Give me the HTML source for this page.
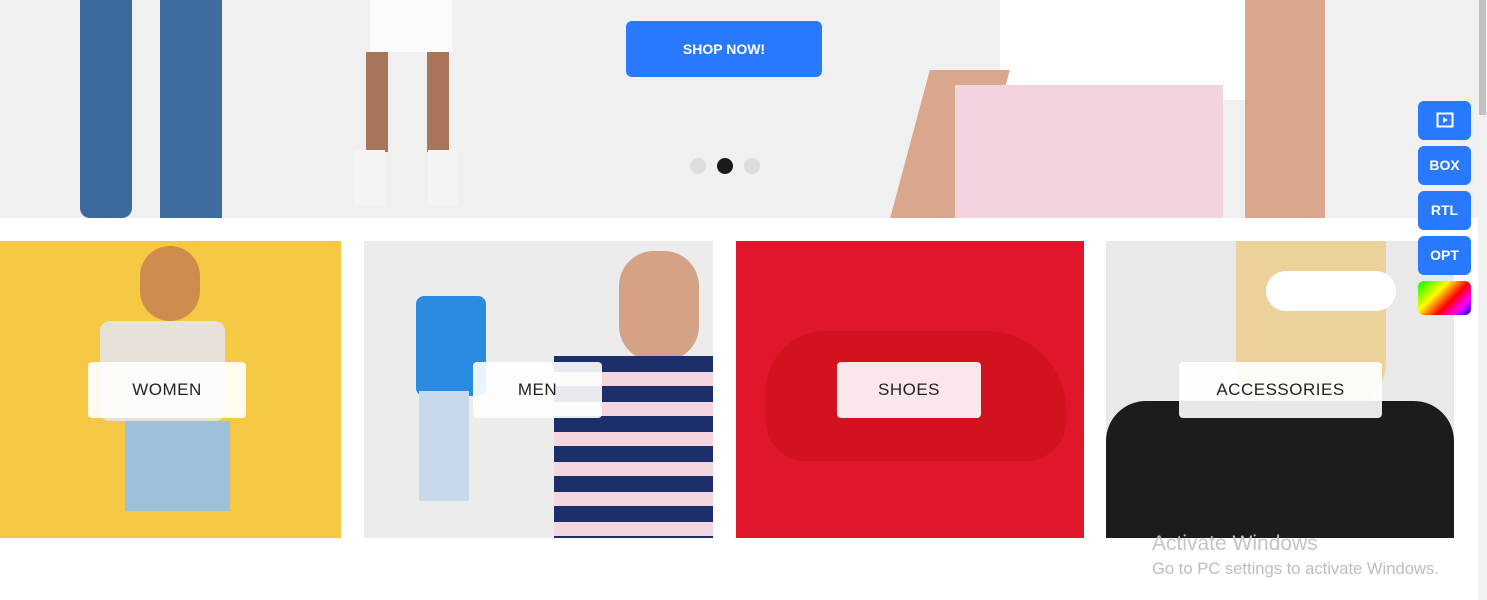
<!DOCTYPE html>
<html><head><meta charset="utf-8"><style>
*{margin:0;padding:0;box-sizing:border-box}
body{width:1487px;height:600px;overflow:hidden;background:#fff;font-family:"Liberation Sans",sans-serif;position:relative}
.hero{position:absolute;left:0;top:0;width:1478px;height:218px;background:#f0f0f0;overflow:hidden}
.btn{position:absolute;left:626px;top:21px;width:196px;height:56px;background:#2979ff;border-radius:6px;color:#fff;font-weight:bold;font-size:14px;text-align:center;line-height:56px}
.dot{position:absolute;top:158px;width:16px;height:16px;border-radius:50%;background:#dcdcdc}
.tile{position:absolute;top:241px;height:297px;overflow:hidden}
.lbl{position:absolute;top:121px;height:56px;background:rgba(255,255,255,.9);border-radius:4px;font-size:17px;color:#222;text-align:center;line-height:56px;letter-spacing:.5px}
.sb{position:absolute;left:1418px;width:53px;height:39px;background:#2979ff;border-radius:6px;color:#fff;font-weight:bold;font-size:14px;text-align:center;line-height:39px}
.abs{position:absolute}
</style></head><body>
<div class="hero">
  <div class="abs" style="left:80px;top:0;width:52px;height:218px;background:#3d6a9e;border-radius:0 0 10px 10px"></div>
  <div class="abs" style="left:160px;top:0;width:62px;height:218px;background:#3f6c9f"></div>
  <div class="abs" style="left:370px;top:0;width:82px;height:52px;background:#fafafa"></div>
  <div class="abs" style="left:366px;top:52px;width:22px;height:100px;background:#a7765a"></div>
  <div class="abs" style="left:427px;top:52px;width:22px;height:100px;background:#a7765a"></div>
  <div class="abs" style="left:355px;top:150px;width:30px;height:55px;background:#f4f4f4"></div>
  <div class="abs" style="left:428px;top:150px;width:30px;height:55px;background:#f4f4f4"></div>
  <div class="abs" style="left:1000px;top:0;width:250px;height:100px;background:#fff"></div>
  <div class="abs" style="left:1245px;top:0;width:80px;height:218px;background:#d9a78d"></div>
  <div class="abs" style="left:910px;top:70px;width:80px;height:148px;background:#d9a78d;transform:skewX(-15deg)"></div>
  <div class="abs" style="left:955px;top:85px;width:268px;height:133px;background:#f3d3e0"></div>
  <a class="btn">SHOP NOW!</a>
  <div class="dot" style="left:690px"></div>
  <div class="dot" style="left:717px;background:#1a1a1a"></div>
  <div class="dot" style="left:744px"></div>
</div>
<div class="abs" style="left:1478px;top:0;width:9px;height:600px;background:#f1f1f1"></div>
<div class="abs" style="left:1479px;top:0;width:7px;height:115px;background:#c1c1c1"></div>

<div class="tile" style="left:0;width:341px;background:#f6c945">
  <div class="abs" style="left:140px;top:5px;width:60px;height:75px;background:#d08b4e;border-radius:30px"></div>
  <div class="abs" style="left:100px;top:80px;width:125px;height:100px;background:#e8e1d7;border-radius:10px"></div>
  <div class="abs" style="left:125px;top:180px;width:105px;height:90px;background:#9ec0da"></div>
  <div class="lbl" style="left:88px;width:158px">WOMEN</div>
</div>
<div class="tile" style="left:364px;width:349px;background:#ececec">
  <div class="abs" style="left:52px;top:55px;width:70px;height:100px;background:#2a8be0;border-radius:8px"></div>
  <div class="abs" style="left:55px;top:150px;width:50px;height:110px;background:#c7d9ea"></div>
  <div class="abs" style="left:255px;top:10px;width:80px;height:110px;background:#d4a284;border-radius:35px"></div>
  <div class="abs" style="left:190px;top:115px;width:160px;height:182px;background:repeating-linear-gradient(#1d2f6b 0 16px,#f3d6df 16px 30px)"></div>
  <div class="lbl" style="left:109px;width:129px">MEN</div>
</div>
<div class="tile" style="left:736px;width:348px;background:#e0162b">
  <div class="abs" style="left:30px;top:90px;width:300px;height:130px;background:#d2121f;border-radius:60px 80px 40px 40px"></div>
  <div class="lbl" style="left:101px;width:144px">SHOES</div>
</div>
<div class="tile" style="left:1106px;width:348px;background:#e9e9e9">
  <div class="abs" style="left:130px;top:0;width:150px;height:180px;background:#ecd19a;border-radius:0 0 60px 60px"></div>
  <div class="abs" style="left:160px;top:30px;width:130px;height:40px;background:#fff;border-radius:20px"></div>
  <div class="abs" style="left:0;top:160px;width:348px;height:137px;background:#1c1c1c;border-radius:40px 40px 0 0"></div>
  <div class="lbl" style="left:73px;width:203px">ACCESSORIES</div>
</div>

<div class="sb" style="top:101px"><svg width="18" height="16" viewBox="0 0 18 16" style="margin-top:11px"><rect x="1.5" y="1.5" width="15" height="13" fill="none" stroke="#fff" stroke-width="2"/><path d="M7 5v6l5-3z" fill="#fff"/></svg></div>
<div class="sb" style="top:146px">BOX</div>
<div class="sb" style="top:191px">RTL</div>
<div class="sb" style="top:236px">OPT</div>
<div class="sb" style="top:281px;height:34px;background:linear-gradient(135deg,#0f0 0%,#ff0 35%,#f00 60%,#f0f 80%,#00f 100%)"></div>
<div class="abs" style="left:1152px;top:532px;font-size:21px;color:#c4c4c4">Activate Windows</div>
<div class="abs" style="left:1152px;top:559px;font-size:16.6px;color:#bdbdbd">Go to PC settings to activate Windows.</div>
</body></html>
